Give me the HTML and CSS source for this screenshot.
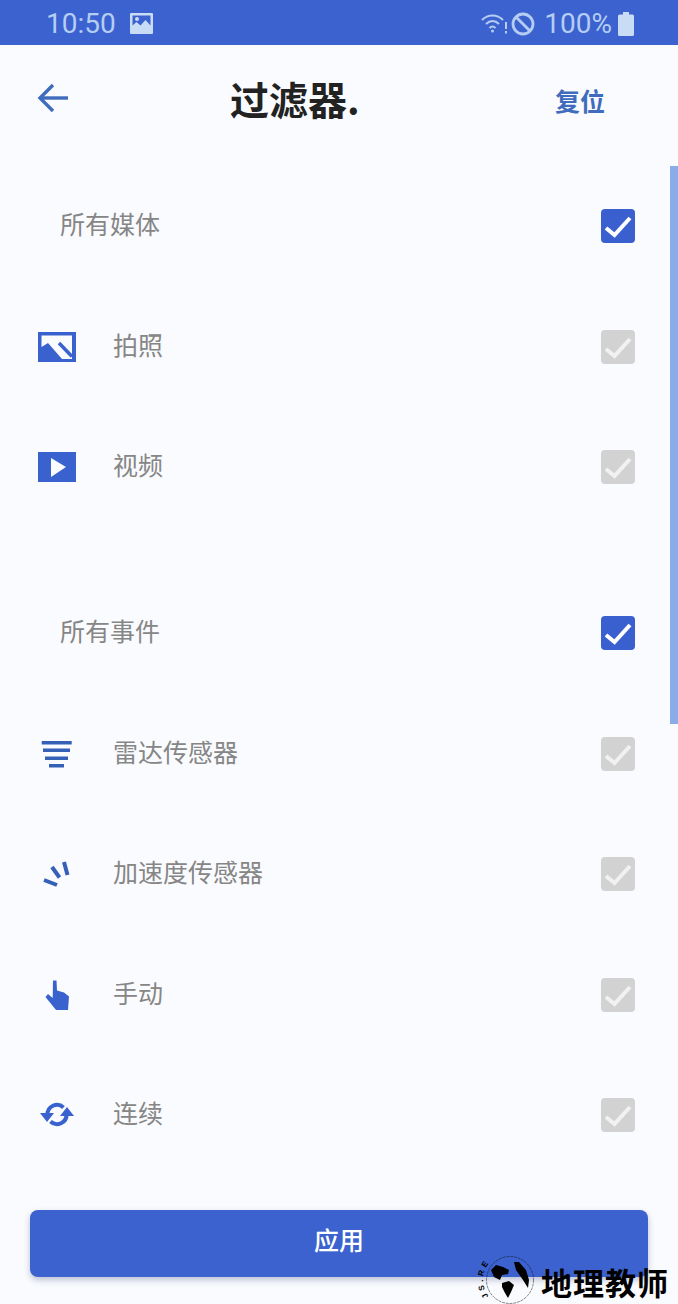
FILE: index.html
```html
<!DOCTYPE html>
<html lang="zh">
<head>
  <meta charset="UTF-8">
  <meta name="viewport" content="width=device-width, initial-scale=1.0">
  <title>过滤器</title>
  <link rel="stylesheet" href="styles.css">
</head>
<body>
  <div class="page">
    <div class="status-bar">
      <div class="status-left">
        <span class="status-text">10:50</span>
        <svg class="status-image" viewBox="0 0 23 21">
          <path fill="#c9dcf6" fill-rule="evenodd" d="M1 0h21a1 1 0 0 1 1 1v19a1 1 0 0 1-1 1H1a1 1 0 0 1-1-1V1a1 1 0 0 1 1-1zM2.500 2.500v10l4-3.500 4 3.500 5-5.500 5 5.500v-10zM7 4a2 2 0 1 1 0 4 2 2 0 0 1 0-4z"/>
        </svg>
      </div>
      <div class="status-right">
        <svg class="status-wifi" viewBox="0 0 27 23" fill="none" stroke="#b5cdf2" stroke-width="2">
          <path d="M1 8c6-6 15-6 21 0"/>
          <path d="M5 12c4-4 9-4 13 0"/>
          <path d="M8.500 16c2-2 4-2 6 0"/>
          <circle cx="11.500" cy="19" r="1.500" fill="#b5cdf2" stroke="none"/>
          <path d="M25 10v7M25 19v2.500"/>
        </svg>
        <svg class="status-block" viewBox="0 0 24 24" fill="none" stroke="#b5cdf2" stroke-width="2.800">
          <circle cx="12" cy="12" r="10"/>
          <path d="M5 5l14 14"/>
        </svg>
        <span class="status-text">100%</span>
        <svg class="status-battery" viewBox="0 0 16 24">
          <path fill="#c9dcf6" d="M5 0h6v2.500h3.500a1.500 1.500 0 0 1 1.500 1.500v18.500a1.500 1.500 0 0 1-1.500 1.500h-13A1.500 1.500 0 0 1 0 22.500V4a1.500 1.500 0 0 1 1.500-1.500H5z"/>
        </svg>
      </div>
    </div>

    <div class="header">
      <svg class="back-icon" viewBox="0 0 32 30" fill="none" stroke="#3f6cbc" stroke-width="3.400">
        <path d="M31 15H3"/>
        <path d="M16 2L3 15l13 13"/>
      </svg>
      <h1 class="title">过滤器.</h1>
      <a class="reset">复位</a>
    </div>

    <div class="content">
      <div class="list">
        <div class="group">
          <div class="row">
            <span class="label label-main">所有媒体</span>
            <span class="checkbox on"><svg viewBox="0 0 34 34"><path d="M5 19l8.500 7L29 9"/></svg></span>
          </div>
          <div class="row">
            <svg class="row-icon" viewBox="0 0 38 30">
              <path fill="#3a62cf" d="M0 0h38v30H0z"/>
              <path fill="#fafbfe" d="M3.500 3.500H34V27H24L10 11l-6.500 4z"/>
              <path fill="none" stroke="#3a62cf" stroke-width="3.500" d="M21 11l13 13.500"/>
            </svg>
            <span class="label">拍照</span>
            <span class="checkbox"><svg viewBox="0 0 34 34"><path d="M5 19l8.500 7L29 9"/></svg></span>
          </div>
          <div class="row">
            <svg class="row-icon" viewBox="0 0 38 30">
              <path fill="#3a62cf" d="M0 0h38v30H0z"/>
              <path fill="#fafbfe" d="M13 6l15 9-15 10z"/>
            </svg>
            <span class="label">视频</span>
            <span class="checkbox"><svg viewBox="0 0 34 34"><path d="M5 19l8.500 7L29 9"/></svg></span>
          </div>
        </div>

        <div class="group">
          <div class="row">
            <span class="label label-main">所有事件</span>
            <span class="checkbox on"><svg viewBox="0 0 34 34"><path d="M5 19l8.500 7L29 9"/></svg></span>
          </div>
          <div class="row">
            <svg class="row-icon" viewBox="0 0 38 30" fill="#3560b8">
              <path d="M3.700 2h30v3.500h-30zM5 9.500h27V13H5zM7 17.500h23V21H7zM11 25h15v3.500H11z"/>
            </svg>
            <span class="label">雷达传感器</span>
            <span class="checkbox"><svg viewBox="0 0 34 34"><path d="M5 19l8.500 7L29 9"/></svg></span>
          </div>
          <div class="row">
            <svg class="row-icon" viewBox="0 0 38 30" fill="none" stroke="#3560b8" stroke-width="4">
              <path d="M26 3l3.500 13M14 8l7.500 10.500M6 21l13 5"/>
            </svg>
            <span class="label">加速度传感器</span>
            <span class="checkbox"><svg viewBox="0 0 34 34"><path d="M5 19l8.500 7L29 9"/></svg></span>
          </div>
          <div class="row">
            <svg class="row-icon" viewBox="0 0 38 30">
              <path fill="#3a62cf" d="M15 0.500h3.500l.5 10 7 2 5 4-1 13.500H18L7.500 17l2.500-3 4.700 4z"/>
            </svg>
            <span class="label">手动</span>
            <span class="checkbox"><svg viewBox="0 0 34 34"><path d="M5 19l8.500 7L29 9"/></svg></span>
          </div>
          <div class="row">
            <svg class="row-icon" viewBox="0 0 38 30">
              <path fill="none" stroke="#3a62cf" stroke-width="4" d="M9.500 15A9.500 9.500 0 0 1 25.500 7.500M28.500 14A9.500 9.500 0 0 1 12.500 21.500"/>
              <path fill="#3a62cf" d="M2 13h14l-7 9zM22 16h14l-7-9z"/>
            </svg>
            <span class="label">连续</span>
            <span class="checkbox"><svg viewBox="0 0 34 34"><path d="M5 19l8.500 7L29 9"/></svg></span>
          </div>
        </div>
      </div>
      <div class="scrollbar"></div>
    </div>

    <div class="footer">
      <button class="apply" type="button">应用</button>
    </div>

    <div class="watermark">
      <svg class="watermark-logo" viewBox="0 0 64 64">
        <defs><path id="ring" d="M14 51A27 27 0 0 1 31 6.200" fill="none"/></defs>
        <circle cx="34" cy="33" r="23.500" fill="none" stroke="#111" stroke-width="0.500" stroke-dasharray="3 0.800"/>
        <path fill="#000" d="M15 23l5-5 7 2 6 3-1 4-6 1-2 5-6-3z"/>
        <path fill="#000" d="M38 15h5l7 8 3 10-1 8-5-8-7-10z"/>
        <path fill="#000" d="M26 36l7-2 5 4-3 7-3 6-3-5-3-6z"/>
        <text class="watermark-ring"><textPath href="#ring" startOffset="2">JS.RE</textPath></text>
      </svg>
      <span class="watermark-text">地理教师</span>
    </div>
  </div>
</body>
</html>
```
FILE: styles.css
```css
* {
  box-sizing: border-box;
}
body {
  margin: 0;
  font-family: Roboto, "Noto Sans CJK SC", sans-serif;
  background-color: #fafbfe;
}
.page {
  position: relative;
  display: flex;
  flex-direction: column;
  height: 1304px;
  overflow: hidden;
}
.status-bar {
  display: flex;
  align-items: center;
  justify-content: space-between;
  height: 45px;
  padding: 2px 44px 0 46px;
  background-color: #3b62cf;
  flex-shrink: 0;
}
.status-left, .status-right {
  display: flex;
  align-items: center;
}
.status-text {
  font-size: 28px;
  color: #b5cdf2;
}
.status-image {
  width: 23px;
  height: 21px;
  margin-left: 14px;
}
.status-wifi {
  width: 27px;
  height: 23px;
}
.status-block {
  width: 24px;
  height: 24px;
  margin: 0 9px 0 3px;
}
.status-battery {
  width: 16px;
  height: 24px;
  margin-left: 6px;
}
.header {
  position: relative;
  display: flex;
  align-items: center;
  justify-content: space-between;
  height: 121px;
  padding: 0 73px 15px 37px;
  flex-shrink: 0;
}
.back-icon {
  width: 32px;
  height: 30px;
}
.title {
  position: absolute;
  left: 230px;
  top: 24px;
  margin: 0;
  font-family: "Noto Sans CJK SC", sans-serif;
  font-size: 39px;
  line-height: 58px;
  font-weight: 700;
  color: #222;
}
.reset {
  margin-top: 4px;
  font-family: "Noto Sans CJK SC", sans-serif;
  font-size: 25px;
  font-weight: 700;
  color: #3f6cbc;
}
.content {
  position: relative;
  flex: 1;
}
.list {
  display: flex;
  flex-direction: column;
  gap: 45.5px;
}
.row {
  display: flex;
  align-items: center;
  height: 120.5px;
  padding: 0 43px 0 38px;
}
.row-icon {
  width: 38px;
  height: 30px;
  flex-shrink: 0;
}
.label {
  margin-left: 37px;
  margin-bottom: 6px;
  font-family: "Noto Sans CJK SC", sans-serif;
  font-size: 25px;
  color: #868686;
}
.label-main {
  margin-left: 22px;
}
.checkbox {
  display: block;
  width: 34px;
  height: 34px;
  margin-left: auto;
  border-radius: 4px;
  background-color: #d2d2d2;
}
.checkbox svg {
  display: block;
  width: 34px;
  height: 34px;
  fill: none;
  stroke: #f1f1f1;
  stroke-width: 4;
}
.checkbox.on {
  background-color: #3a60d0;
}
.checkbox.on svg {
  stroke: #fff;
}
.scrollbar {
  position: absolute;
  top: 0;
  right: 0;
  width: 8px;
  height: 558px;
  background-color: #8aace8;
}
.footer {
  padding: 0 30px 27px;
  flex-shrink: 0;
}
.apply {
  display: block;
  width: 100%;
  height: 67px;
  padding: 0 0 10px;
  border: 0;
  border-radius: 8px;
  background-color: #3b62cf;
  box-shadow: 0 3px 6px rgba(40, 60, 120, 0.3);
  font-family: "Noto Sans CJK SC", sans-serif;
  font-size: 25px;
  font-weight: 500;
  color: #fff;
}
.watermark {
  position: absolute;
  left: 476px;
  top: 1247px;
  display: flex;
  align-items: flex-start;
}
.watermark-logo {
  width: 64px;
  height: 64px;
  flex-shrink: 0;
  overflow: visible;
}
.watermark-ring {
  font-family: "Liberation Sans", sans-serif;
  font-size: 8px;
  font-weight: 700;
  letter-spacing: 3px;
  fill: #000;
}
.watermark-text {
  margin-left: 1px;
  margin-top: 15px;
  font-family: "Noto Sans CJK SC", serif;
  font-size: 31px;
  line-height: 40px;
  font-weight: 700;
  letter-spacing: 1px;
  color: #000;
}
```
